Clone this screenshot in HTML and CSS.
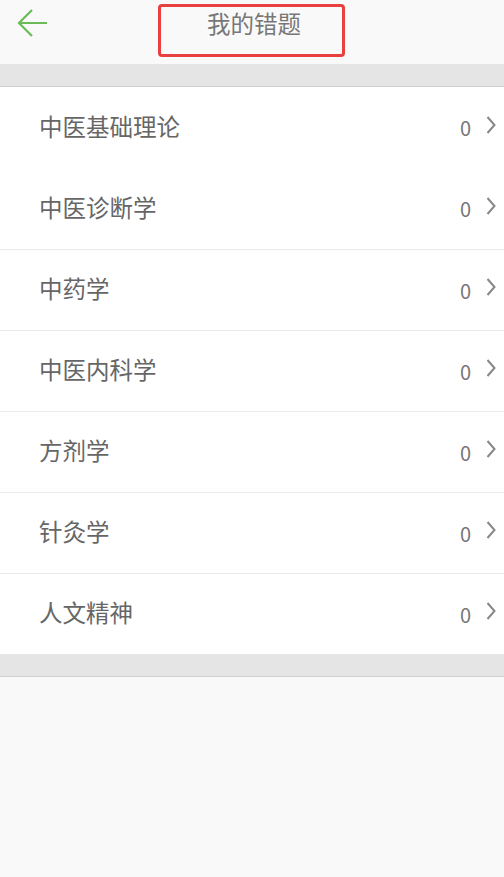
FILE: index.html
```html
<!DOCTYPE html>
<html lang="zh">
<head>
  <meta charset="UTF-8">
  <meta name="viewport" content="width=device-width, initial-scale=1.0">
  <title>我的错题</title>
  <link rel="stylesheet" href="styles.css">
</head>
<body>
  <header class="topbar">
    <a class="back" href="#">
      <svg width="32" height="32" viewBox="0 0 32 32">
        <path d="M30 14H2M15 1L2 14L15 27" fill="none" stroke="#6abb58" stroke-width="2.2"/>
      </svg>
    </a>
    <div class="title">我的错题</div>
  </header>

  <div class="gap"></div>

  <ul class="list">
    <li class="row"><span class="name">中医基础理论</span><span class="count">0</span><svg class="chev" width="10" height="18" viewBox="0 0 10 18"><path d="M1.5 1L8.5 9L1.5 17" fill="none" stroke="#888" stroke-width="2"/></svg></li>
    <li class="row"><span class="name">中医诊断学</span><span class="count">0</span><svg class="chev" width="10" height="18" viewBox="0 0 10 18"><path d="M1.5 1L8.5 9L1.5 17" fill="none" stroke="#888" stroke-width="2"/></svg></li>
    <li class="row line"><span class="name">中药学</span><span class="count">0</span><svg class="chev" width="10" height="18" viewBox="0 0 10 18"><path d="M1.5 1L8.5 9L1.5 17" fill="none" stroke="#888" stroke-width="2"/></svg></li>
    <li class="row line"><span class="name">中医内科学</span><span class="count">0</span><svg class="chev" width="10" height="18" viewBox="0 0 10 18"><path d="M1.5 1L8.5 9L1.5 17" fill="none" stroke="#888" stroke-width="2"/></svg></li>
    <li class="row line"><span class="name">方剂学</span><span class="count">0</span><svg class="chev" width="10" height="18" viewBox="0 0 10 18"><path d="M1.5 1L8.5 9L1.5 17" fill="none" stroke="#888" stroke-width="2"/></svg></li>
    <li class="row line"><span class="name">针灸学</span><span class="count">0</span><svg class="chev" width="10" height="18" viewBox="0 0 10 18"><path d="M1.5 1L8.5 9L1.5 17" fill="none" stroke="#888" stroke-width="2"/></svg></li>
    <li class="row line"><span class="name">人文精神</span><span class="count">0</span><svg class="chev" width="10" height="18" viewBox="0 0 10 18"><path d="M1.5 1L8.5 9L1.5 17" fill="none" stroke="#888" stroke-width="2"/></svg></li>
  </ul>

  <div class="gap"></div>
</body>
</html>
```

FILE: styles.css
```css
body {
  margin: 0;
  padding: 0;
  background-color: #f9f9f9;
  font-family: "Noto Sans CJK SC", "Noto Sans", sans-serif;
  color: #666;
}

.topbar {
  height: 64px;
  position: relative;
  display: flex;
  justify-content: center;
  align-items: flex-start;
}

.back {
  position: absolute;
  left: 17px;
  top: 9px;
  display: block;
  width: 32px;
  height: 32px;
}

.title {
  box-sizing: border-box;
  width: 187px;
  height: 53px;
  margin-top: 4px;
  margin-left: -2px;
  padding-left: 6px;
  border: 3px solid #e8403f;
  border-radius: 4px;
  text-align: center;
  font-size: 23.5px;
  line-height: 32px;
  color: #777;
}

.gap {
  height: 22px;
  background-color: #e5e5e5;
  border-bottom: 1px solid #cfcfcf;
}

.list {
  list-style: none;
  margin: 0;
  padding: 0;
  background-color: #fff;
}

.row {
  box-sizing: border-box;
  height: 81px;
  display: flex;
  align-items: center;
  padding: 0 8px 0 39px;
}

.row.line {
  border-top: 1px solid #ebebeb;
}

.name {
  flex: 1;
  font-size: 23.5px;
  color: #666;
  margin-top: -4px;
}

.count {
  font-size: 20px;
  color: #777;
  margin-right: 15px;
}

.chev {
  display: block;
  margin-top: -6px;
}
```
